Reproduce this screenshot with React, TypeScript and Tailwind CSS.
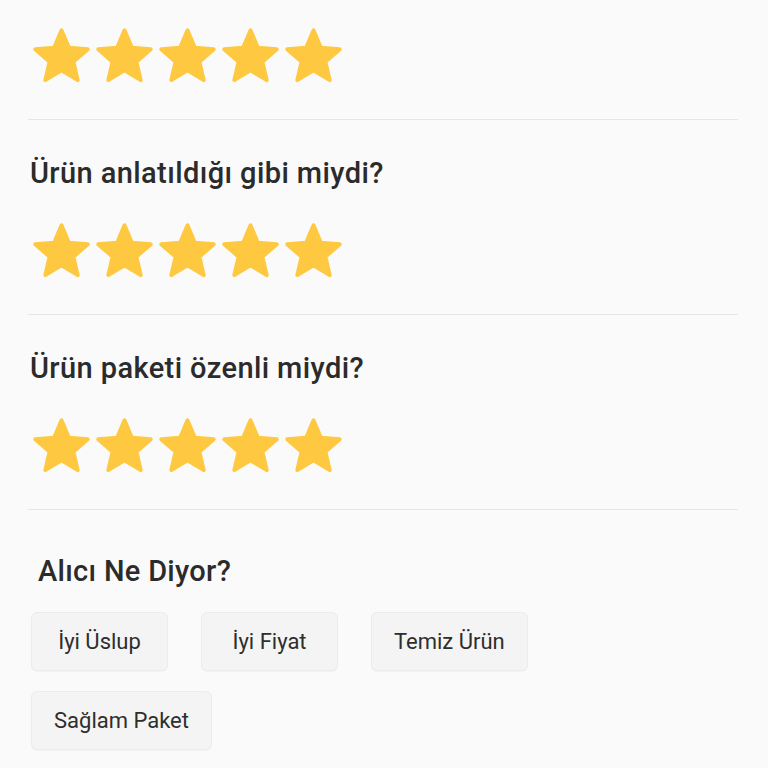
import { FC } from 'react';

const questions = ['Ürün anlatıldığı gibi miydi?', 'Ürün paketi özenli miydi?'];
const tags = ['İyi Üslup', 'İyi Fiyat', 'Temiz Ürün', 'Sağlam Paket'];

const Star: FC = () => (
  <svg viewBox="0 0 24 24" className="w-[63px] h-[63px] shrink-0">
    <path
      d="M12 17.27L18.18 21l-1.64-7.03L22 9.24l-7.19-.61L12 2 9.19 8.63 2 9.24l5.46 4.73L5.82 21z"
      fill="#fec940"
      stroke="#fec940"
      strokeWidth="1.5"
      strokeLinejoin="round"
    />
  </svg>
);

const Stars: FC = () => (
  <div className="flex pl-[2px]">
    {[0, 1, 2, 3, 4].map((i) => (
      <Star key={i} />
    ))}
  </div>
);

const App: FC = () => {
  return (
    <div className="min-h-[768px] w-[768px] bg-[#fafafa] font-['Roboto',sans-serif] text-[#2b2b2b] overflow-hidden">
      <div className="ml-[28px] w-[710px]">
        <section className="pt-[25px] pb-[31px] border-b border-[#e6e6e6]">
          <Stars />
        </section>

        {questions.map((q) => (
          <section key={q} className="pt-[36px] pb-[31px] border-b border-[#e6e6e6]">
            <h2 className="pl-[2px] text-[29px] leading-[34px] font-medium tracking-[0.4px]">{q}</h2>
            <div className="mt-[30px]">
              <Stars />
            </div>
          </section>
        ))}

        <section className="pt-[44px]">
          <h2 className="pl-[10px] text-[29px] leading-[34px] font-medium tracking-[0.3px]">Alıcı Ne Diyor?</h2>
          <div className="mt-[24px] pl-[3px] flex flex-wrap gap-x-[33px] gap-y-[20px]">
            {tags.map((t) => (
              <button
                key={t}
                className="h-[59px] min-w-[137px] px-[22px] rounded-[6px] border border-[#ececec] bg-[#f4f4f4] shadow-[0_1px_1px_rgba(0,0,0,0.03)] text-[22px] text-[#2e2e2e] text-center"
              >
                {t}
              </button>
            ))}
          </div>
        </section>
      </div>
    </div>
  );
};

export default App;
